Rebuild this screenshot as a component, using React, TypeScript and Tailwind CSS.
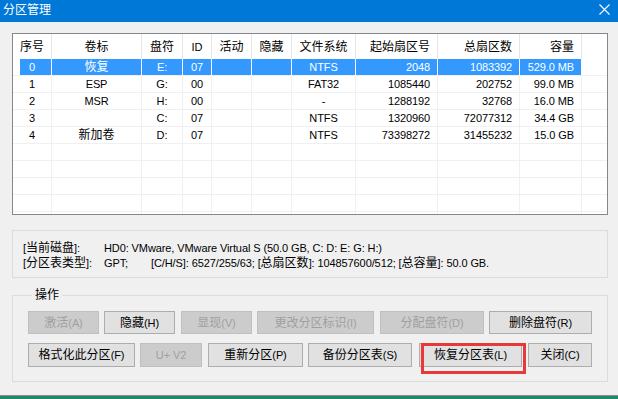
import React from "react";

// splits a string into CJK / latin runs so each can get its own size
function Mix({ s }: { s: string }) {
  const parts = s.split(/([\u3000-\u9fff\uff00-\uffef]+)/).filter((p) => p !== "");
  return (
    <>
      {parts.map((p, i) =>
        /[\u3000-\u9fff\uff00-\uffef]/.test(p) ? (
          <span key={i} className="text-[12px]">{p}</span>
        ) : (
          <span key={i} className="text-[11px] tracking-[-0.1px] whitespace-pre">{p}</span>
        )
      )}
    </>
  );
}

const COLS = [
  { head: "序号", w: "w-[39px]", a: "justify-center" },
  { head: "卷标", w: "w-[90px]", a: "justify-center" },
  { head: "盘符", w: "w-[41px]", a: "justify-center" },
  { head: "ID", w: "w-[29px]", a: "justify-center" },
  { head: "活动", w: "w-[40px]", a: "justify-center" },
  { head: "隐藏", w: "w-[40px]", a: "justify-center" },
  { head: "文件系统", w: "w-[64px]", a: "justify-center" },
  { head: "起始扇区号", w: "w-[82px]", a: "justify-end pr-[7px]" },
  { head: "总扇区数", w: "w-[82px]", a: "justify-end pr-[7px]" },
  { head: "容量", w: "w-[62px]", a: "justify-end pr-[7px]" },
];

const ROWS = [
  ["0", "恢复", "E:", "07", "", "", "NTFS", "2048", "1083392", "529.0 MB"],
  ["1", "ESP", "G:", "00", "", "", "FAT32", "1085440", "202752", "99.0 MB"],
  ["2", "MSR", "H:", "00", "", "", "-", "1288192", "32768", "16.0 MB"],
  ["3", "", "C:", "07", "", "", "NTFS", "1320960", "72077312", "34.4 GB"],
  ["4", "新加卷", "D:", "07", "", "", "NTFS", "73398272", "31455232", "15.0 GB"],
  ["", "", "", "", "", "", "", "", "", ""],
  ["", "", "", "", "", "", "", "", "", ""],
  ["", "", "", "", "", "", "", "", "", ""],
  ["", "", "", "", "", "", "", "", "", ""],
  ["", "", "", "", "", "", "", "", "", ""],
];

function Btn({ label, w, ml, off }: { label: string; w: string; ml?: string; off?: boolean }) {
  return (
    <div
      className={`${w} ${ml ?? ""} h-full shrink-0 flex items-center justify-center border leading-[14px] ${
        off ? "bg-[#cccccc] border-[#bfbfbf] text-[#a0a0a0]" : "bg-[#e1e1e1] border-[#adadad] text-black"
      }`}
    >
      <Mix s={label} />
    </div>
  );
}

export default function App() {
  return (
    <div className="w-[618px] h-[399px] bg-[#f0f0f0] flex flex-col overflow-hidden font-['Liberation_Sans','Noto_Sans_CJK_SC',sans-serif] text-black">
      {/* title bar */}
      <div className="h-[22px] shrink-0 bg-[#0078d7] flex items-start justify-between pl-[3px] pr-[8px]">
        <span className="text-white text-[12px] leading-[14px] pt-[3px]">分区管理</span>
        <svg width="11" height="11" viewBox="0 0 11 11" className="mt-[4px]">
          <path d="M0.5 0.5 L10.5 10.5 M10.5 0.5 L0.5 10.5" stroke="#fff" strokeWidth="1.1" />
        </svg>
      </div>

      {/* partition list */}
      <div className="mt-[11px] ml-[12px] w-[596px] h-[182px] shrink-0 border border-[#828790] bg-white overflow-hidden">
        <div className="h-[25px] flex">
          {COLS.map((c) => (
            <div key={c.head} className={`${c.w} shrink-0 h-full flex items-center border-r border-[#e5e5e5] leading-[14px] ${c.a}`}>
              <Mix s={c.head} />
            </div>
          ))}
          <div className="flex-1" />
        </div>
        {ROWS.map((r, ri) => {
          const sel = ri === 0;
          return (
            <div key={ri} className="h-[17px] flex border-b border-[#f0f0f0]">
              {COLS.map((c, ci) => (
                <div
                  key={ci}
                  className={`${c.w} shrink-0 h-full flex items-center border-r leading-[16px] ${c.a} ${
                    sel
                      ? ci === 0
                        ? "border-white text-white bg-[linear-gradient(to_right,transparent_7px,#3399ff_7px)]"
                        : "border-white text-white bg-[#3399ff]"
                      : "border-[#f0f0f0]"
                  }`}
                >
                  <Mix s={r[ci]} />
                </div>
              ))}
              <div className="flex-1" />
            </div>
          );
        })}
      </div>

      {/* disk info */}
      <div className="mt-[15px] ml-[12px] w-[596px] h-[48px] shrink-0 border border-[#dcdcdc] pl-[10px] pt-[9px] leading-[13px]">
        <div className="flex">
          <div className="w-[81px]"><Mix s="[当前磁盘]:" /></div>
          <div><Mix s="HD0: VMware, VMware Virtual S (50.0 GB, C: D: E: G: H:)" /></div>
        </div>
        <div className="flex">
          <div className="w-[81px]"><Mix s="[分区表类型]:" /></div>
          <div className="w-[47px]"><Mix s="GPT;" /></div>
          <div><Mix s="[C/H/S]: 6527/255/63; [总扇区数]: 104857600/512; [总容量]: 50.0 GB." /></div>
        </div>
      </div>

      {/* operations */}
      <fieldset className="mt-[10px] ml-[12px] w-[596px] shrink-0 border border-[#dcdcdc] pl-[15px] pt-[9px] pb-[14px]">
        <legend className="ml-[4px] px-[3px] text-[12px] leading-[14px]">操作</legend>
        <div className="h-[23px] flex">
          <Btn label="激活(A)" w="w-[71px]" off />
          <Btn label="隐藏(H)" w="w-[71px]" ml="ml-[5px]" />
          <Btn label="显现(V)" w="w-[71px]" ml="ml-[6px]" off />
          <Btn label="更改分区标识(I)" w="w-[117px]" ml="ml-[5px]" off />
          <Btn label="分配盘符(D)" w="w-[104px]" ml="ml-[6px]" off />
          <Btn label="删除盘符(R)" w="w-[103px]" ml="ml-[5px]" />
        </div>
        <div className="h-[24px] mt-[9px] flex">
          <Btn label="格式化此分区(F)" w="w-[107px]" />
          <Btn label="U+ V2" w="w-[62px]" ml="ml-[5px]" off />
          <Btn label="重新分区(P)" w="w-[95px]" ml="ml-[6px]" />
          <Btn label="备份分区表(S)" w="w-[104px]" ml="ml-[5px]" />
          <div className="relative ml-[7px] h-full">
            <Btn label="恢复分区表(L)" w="w-[103px]" />
            <div className="absolute left-[2px] top-0 w-[105px] h-[31px] border-[3px] border-[#e8383a]" />
          </div>
          <Btn label="关闭(C)" w="w-[64px]" ml="ml-[6px]" />
        </div>
      </fieldset>

      <div className="flex-1" />
      <div className="h-px bg-[#8a8a8a] shrink-0" />
      <div className="h-[3px] bg-[#21876a] shrink-0" />
    </div>
  );
}
